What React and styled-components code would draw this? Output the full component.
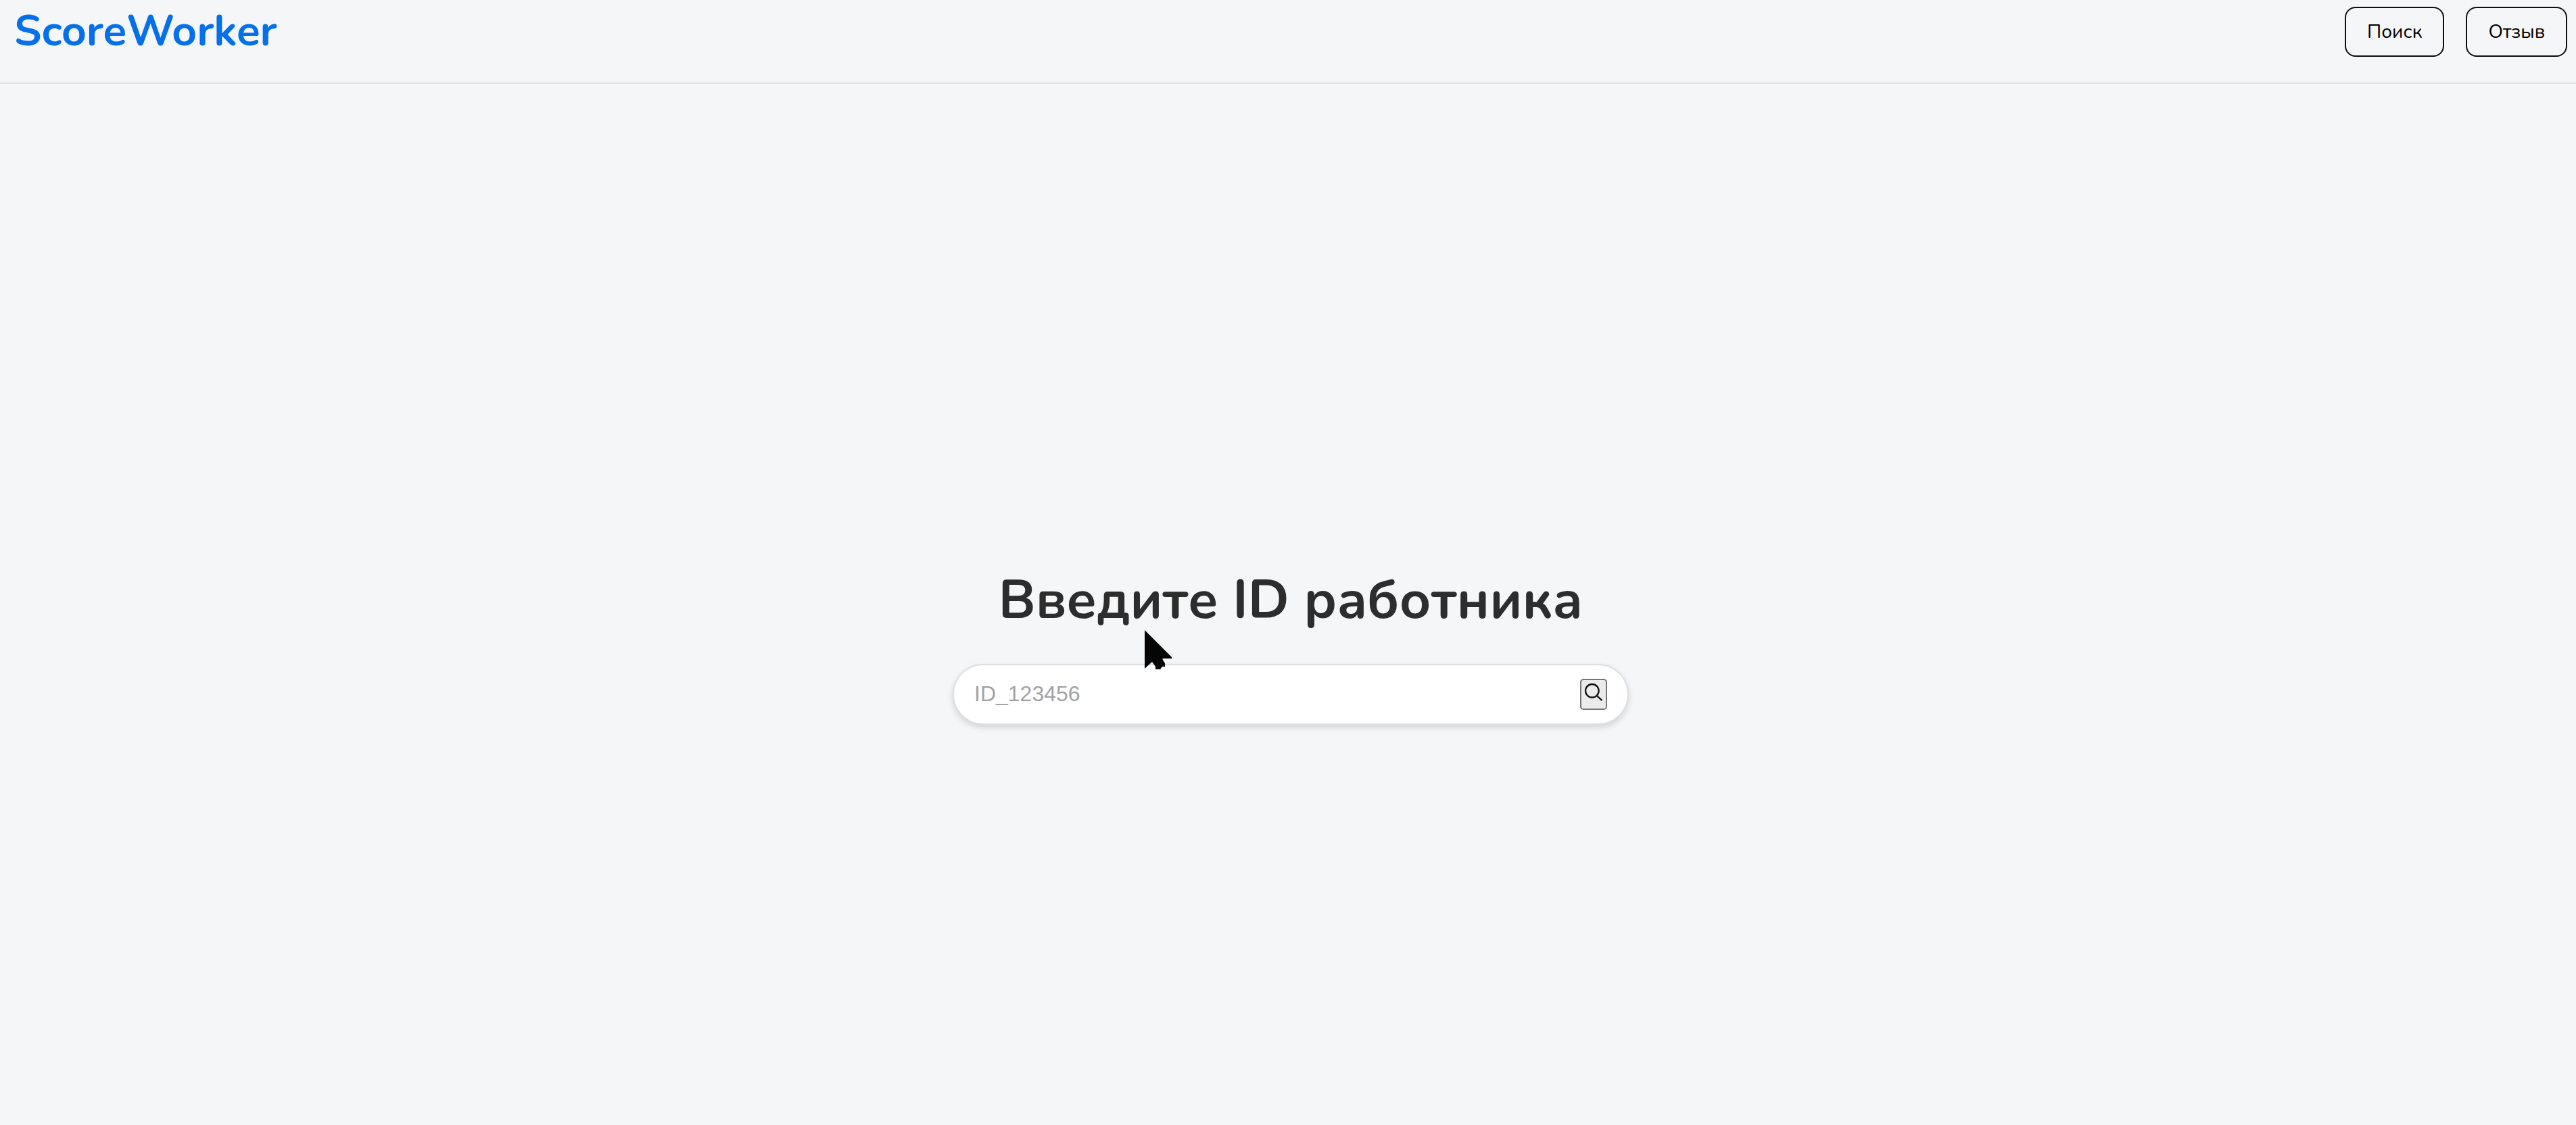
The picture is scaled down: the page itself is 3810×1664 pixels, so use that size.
import React, { useState } from "react";
import styled, { createGlobalStyle } from "styled-components";

const GlobalStyle = createGlobalStyle`
  * {
    box-sizing: border-box;
  }

  body {
    margin: 0;
    background: #f4f6f8;
    font-family: Nunito, "Open Sans", "Noto Sans", sans-serif;
  }
`;

const Page = styled.div`
  display: flex;
  flex-direction: column;
  min-height: 100vh;
`;

const Header = styled.header`
  display: flex;
  align-items: center;
  justify-content: space-between;
  padding: 3px 13px 32px 21px;
  border-bottom: 2px solid #dddfe1;
`;

const Logo = styled.a`
  color: #0570ea;
  font-size: 64px;
  font-weight: 700;
  line-height: 87px;
  text-decoration: none;
`;

const Nav = styled.nav`
  display: flex;
  gap: 32px;
`;

const NavButton = styled.button`
  padding: 16px 31px;
  border: 2px solid #0c0e10;
  border-radius: 16px;
  background: transparent;
  color: #000;
  font-family: inherit;
  font-size: 28px;
  line-height: 38px;
  cursor: pointer;
`;

const Main = styled.main`
  display: flex;
  flex: 1;
  flex-direction: column;
  align-items: center;
  justify-content: center;
  gap: 40px;
  padding: 116px 0 0 8px;
`;

const Title = styled.h1`
  margin: 0;
  color: #2d2d2d;
  font-size: 80px;
  font-weight: 700;
  line-height: 109px;
`;

const SearchForm = styled.form`
  display: flex;
  align-items: center;
  width: 1000px;
  max-width: 100%;
  height: 90px;
  padding: 0 30px;
  border: 2px solid #dddfe1;
  border-radius: 45px;
  background: #fff;
  box-shadow: 0 4px 10px rgba(0, 0, 0, 0.14);
`;

const SearchInput = styled.input`
  flex: 1;
  min-width: 0;
  padding: 0;
  border: none;
  outline: none;
  background: transparent;
  color: #2d2d2d;
  font-family: Arial, "Liberation Sans", sans-serif;
  font-size: 32px;

  &::placeholder {
    color: #a2a2a4;
    opacity: 1;
  }
`;

const SearchButton = styled.button`
  display: flex;
  justify-content: center;
  width: 40px;
  height: 46px;
  padding: 2px 0 0;
  border: 2px solid #767676;
  border-radius: 5px;
  background: #ebebeb;
  color: #0c0c0c;
  cursor: pointer;
`;

const Pointer = styled.svg`
  position: absolute;
  top: 932px;
  left: 1692px;
  width: 44px;
  height: 60px;
  pointer-events: none;
`;

function SearchIcon() {
  return (
    <svg
      width="32"
      height="32"
      viewBox="0 0 32 32"
      fill="none"
      stroke="currentColor"
      strokeWidth="2.3"
      aria-hidden="true"
    >
      <circle cx="13.8" cy="13.8" r="9.8" />
      <path d="M20.800 21 28.200 27.800" />
    </svg>
  );
}

export default function App() {
  const [id, setId] = useState("");

  return (
    <>
      <GlobalStyle />
      <Page>
        <Header>
          <Logo href="#">ScoreWorker</Logo>
          <Nav>
            <NavButton type="button">Поиск</NavButton>
            <NavButton type="button">Отзыв</NavButton>
          </Nav>
        </Header>
        <Main>
          <Title id="search-title">Введите ID работника</Title>
          <SearchForm onSubmit={(event) => event.preventDefault()}>
            <SearchInput
              type="text"
              aria-labelledby="search-title"
              placeholder="ID_123456"
              value={id}
              onChange={(event) => setId(event.target.value)}
            />
            <SearchButton type="submit" aria-label="Поиск">
              <SearchIcon />
            </SearchButton>
          </SearchForm>
        </Main>
      </Page>
      <Pointer viewBox="0 0 44 60" aria-hidden="true">
        <path
          d="M1 0 41 40V42H27L29 46 31 49V54H27L24 58H17V54L12 47 1 57Z"
          fill="#050505"
        />
      </Pointer>
    </>
  );
}
